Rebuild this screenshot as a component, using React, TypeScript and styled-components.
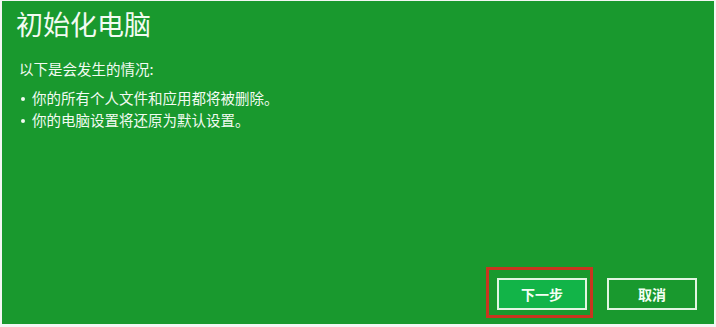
import React from "react";
import styled, { createGlobalStyle } from "styled-components";

const GlobalStyle = createGlobalStyle`
  html, body {
    margin: 0;
    padding: 0;
    background: #f4f6f4;
  }
  body {
    font-family: "Noto Sans CJK SC", "Noto Sans", sans-serif;
  }
`;

const items = ["你的所有个人文件和应用都将被删除。", "你的电脑设置将还原为默认设置。"];

export default function App() {
  return (
    <>
      <GlobalStyle />
      <Panel>
        <Title>初始化电脑</Title>
        <Intro>以下是会发生的情况:</Intro>
        <List>
          {items.map((text) => (
            <Item key={text}>{text}</Item>
          ))}
        </List>
        <Footer>
          <Highlight>
            <Button $primary>下一步</Button>
          </Highlight>
          <CancelButton>取消</CancelButton>
        </Footer>
      </Panel>
    </>
  );
}

const Panel = styled.div`
  box-sizing: border-box;
  display: flex;
  flex-direction: column;
  margin: 1px 2px 0 2px;
  height: 323px;
  padding: 4px 0 0 14px;
  background: #19992e;
  color: #f2fbf2;
`;

const Title = styled.h1`
  margin: 0;
  font-size: 27px;
  font-weight: 400;
  line-height: 38px;
  letter-spacing: 0;
`;

const Intro = styled.p`
  margin: 16px 0 0 3px;
  font-size: 14.5px;
  line-height: 20px;
`;

const List = styled.ul`
  margin: 8px 0 0 3px;
  padding: 0;
  list-style: none;
`;

const Item = styled.li`
  display: flex;
  align-items: center;
  font-size: 14.5px;
  line-height: 22px;

  &::before {
    content: "";
    width: 4px;
    height: 4px;
    border-radius: 50%;
    background: currentColor;
    margin: 1px 7px 0 2px;
  }
`;

const Footer = styled.div`
  margin-top: auto;
  display: flex;
  justify-content: flex-end;
  align-items: flex-start;
  gap: 14px;
  padding: 0 17px 6px 0;
`;

const Highlight = styled.div`
  border: 3px solid #c8361f;
  padding: 8px 3px 5px 8px;
`;

const Button = styled.button<{ $primary?: boolean }>`
  box-sizing: border-box;
  width: 90px;
  height: 32px;
  border: 2px solid #e2f5e2;
  background: ${(p) => (p.$primary ? "#12b448" : "transparent")};
  color: #f4fff4;
  font-family: "Noto Sans CJK SC", sans-serif;
  font-size: 14px;
  font-weight: 700;
  padding: 0;
  cursor: pointer;
`;

const CancelButton = styled(Button)`
  margin-top: 11px;
`;
